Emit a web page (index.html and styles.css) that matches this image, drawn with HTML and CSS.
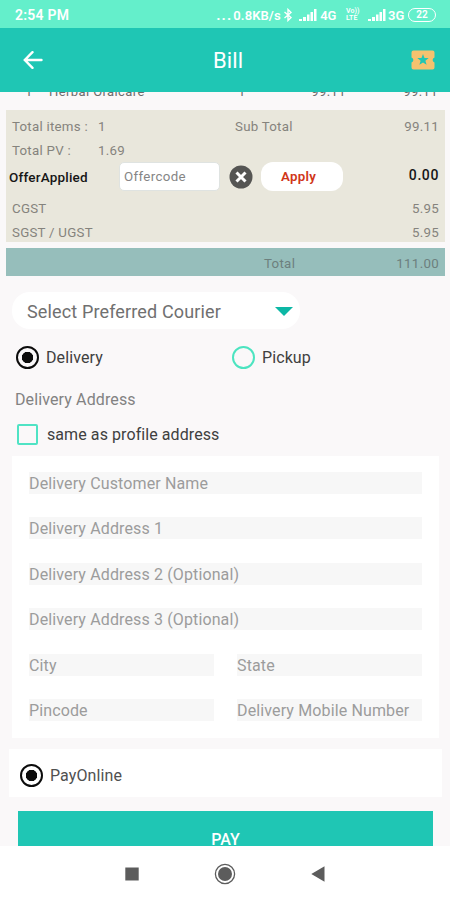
FILE: index.html
```html
<!DOCTYPE html>
<html lang="en">
<head>
<meta charset="utf-8">
<title>Bill</title>
<link rel="stylesheet" href="styles.css">
</head>
<body>
<div class="status">
  <span class="clock">2:54 PM</span>
  <span class="dots">...</span>
  <span class="rate">0.8KB/s</span>
  <svg class="bt" width="10" height="14" viewBox="0 0 10 14"><path d="M1.5 4 8 9.5 5 12.5V1.5L8 4.500 1.500 10" /></svg>
  <svg class="signal s1" width="18" height="12" viewBox="0 0 18 12"><path d="M0 10h3v2H0zM4 8h3v4H4zM8 5.500h2.500V12H8zM11.500 3H14v9h-2.500zM15 0h2.500v12H15z"/></svg>
  <span class="net">4G</span>
  <span class="volte"><span>Vo))</span><span>LTE</span></span>
  <svg class="signal s2" width="18" height="12" viewBox="0 0 18 12"><path d="M0 10h3v2H0zM4 8h3v4H4zM8 5.500h2.500V12H8zM11.500 3H14v9h-2.500zM15 0h2.500v12H15z"/></svg>
  <span class="net">3G</span>
  <span class="battery">22</span>
</div>
<header class="bar">
  <svg class="back" width="20" height="18" viewBox="0 0 20 18"><path d="M18.500 9H2M9.500 1.200 1.800 9l7.700 7.800"/></svg>
  <h1>Bill</h1>
  <svg class="ticket" width="24" height="20" viewBox="0 0 24 20"><path fill="#f5c26f" d="M2.500.5h19A2 2 0 0 1 23.500 2.500V7.500a2.600 2.600 0 0 0 0 5V17.500a2 2 0 0 1-2 2h-19a2 2 0 0 1-2-2V12.500a2.600 2.600 0 0 0 0-5V2.500a2 2 0 0 1 2-2z"/><path fill="#1fc6b4" d="m12 4 1.500 3.900 4.200.2-3.300 2.600 1.200 4.100L12 12.500l-3.600 2.300 1.200-4.100-3.300-2.600 4.200-.2z"/></svg>
</header>
<main class="content">
  <div class="item">
    <span>1</span><span>Herbal Oralcare</span><span>1</span><span class="num">99.11</span><span class="num">99.11</span>
  </div>
  <section class="summary">
    <div class="line"><span class="k">Total items :</span><span class="v">1</span><span class="sub">Sub Total</span><span class="amt">99.11</span></div>
    <div class="line"><span class="k">Total PV :</span><span class="v">1.69</span></div>
    <div class="line offer">
      <span class="applied">OfferApplied</span>
      <span class="code">Offercode</span>
      <svg class="clear" width="24" height="24" viewBox="0 0 24 24"><circle cx="12" cy="12" r="11.500" fill="#555553"/><path d="m7.500 7.500 9 9m0-9-9 9" stroke="#fff" stroke-width="3"/></svg>
      <span class="apply">Apply</span>
      <span class="amt zero">0.00</span>
    </div>
    <div class="line"><span class="k">CGST</span><span class="amt">5.95</span></div>
    <div class="line"><span class="k wide">SGST / UGST</span><span class="amt">5.95</span></div>
  </section>
  <div class="total"><span>Total</span><span class="amt">111.00</span></div>
  <div class="courier"><span>Select Preferred Courier</span><i class="caret"></i></div>
  <div class="modes">
    <span class="option"><i class="radio on"></i><span>Delivery</span></span>
    <span class="option"><i class="radio"></i><span>Pickup</span></span>
  </div>
  <div class="heading">Delivery Address</div>
  <div class="same"><i class="box"></i><span>same as profile address</span></div>
  <section class="form">
    <div class="field"><span>Delivery Customer Name</span></div>
    <div class="field"><span>Delivery Address 1</span></div>
    <div class="field"><span>Delivery Address 2 (Optional)</span></div>
    <div class="field"><span>Delivery Address 3 (Optional)</span></div>
    <div class="pair"><div class="field"><span>City</span></div><div class="field"><span>State</span></div></div>
    <div class="pair"><div class="field"><span>Pincode</span></div><div class="field"><span>Delivery Mobile Number</span></div></div>
  </section>
  <div class="online"><i class="radio on"></i><span>PayOnline</span></div>
  <div class="pay">PAY</div>
</main>
<nav class="nav">
  <svg width="14" height="14" viewBox="0 0 14 14"><path fill="#5c5c5c" d="M.3.5h13.400v13H.3z"/></svg>
  <svg width="22" height="22" viewBox="0 0 22 22"><circle cx="11" cy="11" r="9.600" fill="none" stroke="#5c5c5c" stroke-width="1.300"/><circle cx="11" cy="11" r="7" fill="#5c5c5c"/></svg>
  <svg width="14" height="16" viewBox="0 0 14 16"><path fill="#5c5c5c" d="M13.500.3v15.400L.3 8z"/></svg>
</nav>
</body>
</html>
```
FILE: styles.css
```css
* { box-sizing: border-box; }
body {
  margin: 0;
  width: 450px;
  height: 900px;
  overflow: hidden;
  display: flex;
  flex-direction: column;
  font-family: Roboto, "Liberation Sans", sans-serif;
  background: #faf8f9;
  white-space: nowrap;
}
svg, i { flex: none; }
.status {
  height: 28px;
  background: #64efcb;
  color: #fff;
  display: flex;
  align-items: center;
  padding: 2px 14px 0 15px;
  font-size: 13px;
  font-weight: 600;
}
.clock { width: 202px; font-size: 14px; letter-spacing: .25px; }
.dots { width: 17px; font-size: 15px; letter-spacing: 1px; }
.rate { width: 50px; letter-spacing: .1px; }
.bt { fill: none; stroke: #fff; stroke-width: 1.4; }
.signal { fill: #fff; }
.s1 { margin: 0 3px 0 6px; }
.net { width: 17px; }
.volte { display: flex; flex-direction: column; width: 16px; margin: 0 6px 0 9px; font-size: 7px; line-height: 7px; }
.s2 { margin-right: 2px; }
.battery {
  width: 28px;
  height: 14px;
  border: 1.5px solid #fff;
  border-radius: 7px;
  font-size: 10px;
  line-height: 11px;
  text-align: center;
  margin-left: 3px;
  flex: none;
}
.bar {
  height: 64px;
  background: #1fc6b4;
  color: #fff;
  display: flex;
  align-items: center;
  padding: 0 15px 0 23px;
}
.back { fill: none; stroke: #fff; stroke-width: 2.4; stroke-linecap: round; }
.bar h1 { flex: 1; margin: 1px 0 0 170px; font-size: 22px; font-weight: 400; letter-spacing: .1px; }
.content { height: 754px; overflow: hidden; }
.item {
  height: 18px;
  display: grid;
  grid-template-columns: 24px 189px 40px 68px 92px;
  padding-left: 25px;
  font-size: 13px;
  line-height: 16px;
  letter-spacing: .4px;
  margin-top: -8px;
  margin-bottom: 8px;
  color: #6b6b6b;
}
.item .num { text-align: right; }
.summary {
  height: 132px;
  margin: 0 5px 0 6px;
  padding: 4px 6px 0;
  background: #e9e7dc;
  color: #85837d;
  font-size: 13.3px;
  letter-spacing: .25px;
}
.line { display: flex; align-items: center; height: 24px; }
.k { width: 86px; }
.v { width: 137px; }
.amt { margin-left: auto; }
.offer { height: 29px; margin-bottom: 5px; color: #161616; }
.applied { width: 110px; margin-left: -3px; font-weight: 500; font-size: 13.5px; letter-spacing: .2px; }
.code {
  width: 101px;
  height: 29px;
  border: 1px solid #dfe3e1;
  border-radius: 5px;
  background: #fff;
  color: #858585;
  padding-left: 4px;
  line-height: 28px;
  letter-spacing: .35px;
}
.clear { margin: 0 8px 0 9px; }
.apply {
  width: 82px;
  height: 29px;
  border-radius: 12px;
  background: #fff;
  color: #d03618;
  font-weight: 600;
  line-height: 30px;
  padding-left: 20px;
}
.zero { font-weight: 500; font-size: 14px; letter-spacing: .6px; margin-top: -4px; }
.total {
  height: 28px;
  margin: 5.5px 5px 0 6px;
  padding: 3px 6px 0 258px;
  display: flex;
  align-items: center;
  background: #96bebb;
  color: #6d807e;
  font-size: 13.3px;
  letter-spacing: .3px;
}
.courier {
  width: 288px;
  height: 37px;
  margin: 16.5px 0 0 12px;
  padding: 2px 7px 0 15px;
  border-radius: 18px;
  background: #fff;
  color: #707070;
  font-size: 18px;
  letter-spacing: .14px;
  display: flex;
  align-items: center;
  justify-content: space-between;
}
.caret { border: 9px solid transparent; border-top-color: #0cb7a5; border-bottom: 0; }
.modes { display: flex; margin-top: 14px; height: 28px; align-items: center; }
.option { display: flex; align-items: center; gap: 7px; width: 216px; font-size: 16px; letter-spacing: .1px; color: #404040; }
.option:first-child { margin-left: 16px; }
.radio { width: 23px; height: 23px; border: 2px solid #4ce4c0; border-radius: 50%; }
.radio.on { border-color: #0c0c0c; background: radial-gradient(circle, #0c0c0c 5.4px, transparent 6px); }
.heading { margin: 17px 0 0 15px; height: 24px; font-size: 16px; line-height: 24px; letter-spacing: .12px; color: #828282; }
.same { display: flex; align-items: center; gap: 9px; margin: 10px 0 0 17px; height: 24px; font-size: 16px; letter-spacing: .08px; color: #404040; }
.box { width: 21px; height: 21px; border: 2px solid #4fe3c4; border-radius: 2px; }
.form {
  height: 282px;
  margin: 10px 11px 0 12px;
  padding: 16px 17px 0;
  background: #fff;
  display: flex;
  flex-direction: column;
  gap: 23.4px;
}
.field { height: 22px; background: #f7f7f7; color: #9c9c9c; font-size: 16px; line-height: 23px; letter-spacing: .13px; }
.pair { display: grid; grid-template-columns: 185px 185px; gap: 23px; }
.online {
  height: 48px;
  margin: 11px 8px 0 9px;
  padding: 4px 0 0 11px;
  background: #fff;
  display: flex;
  align-items: center;
  gap: 7px;
  font-size: 16px;
  letter-spacing: .1px;
  color: #505050;
}
.pay {
  height: 56px;
  margin: 14px 17px 0 18px;
  background: #1fc6b4;
  color: #fff;
  font-size: 16px;
  font-weight: 500;
  line-height: 57px;
  text-align: center;
}
.nav { height: 54px; background: #fff; display: flex; align-items: center; gap: 75px; padding: 1px 0 0 125px; }
```
